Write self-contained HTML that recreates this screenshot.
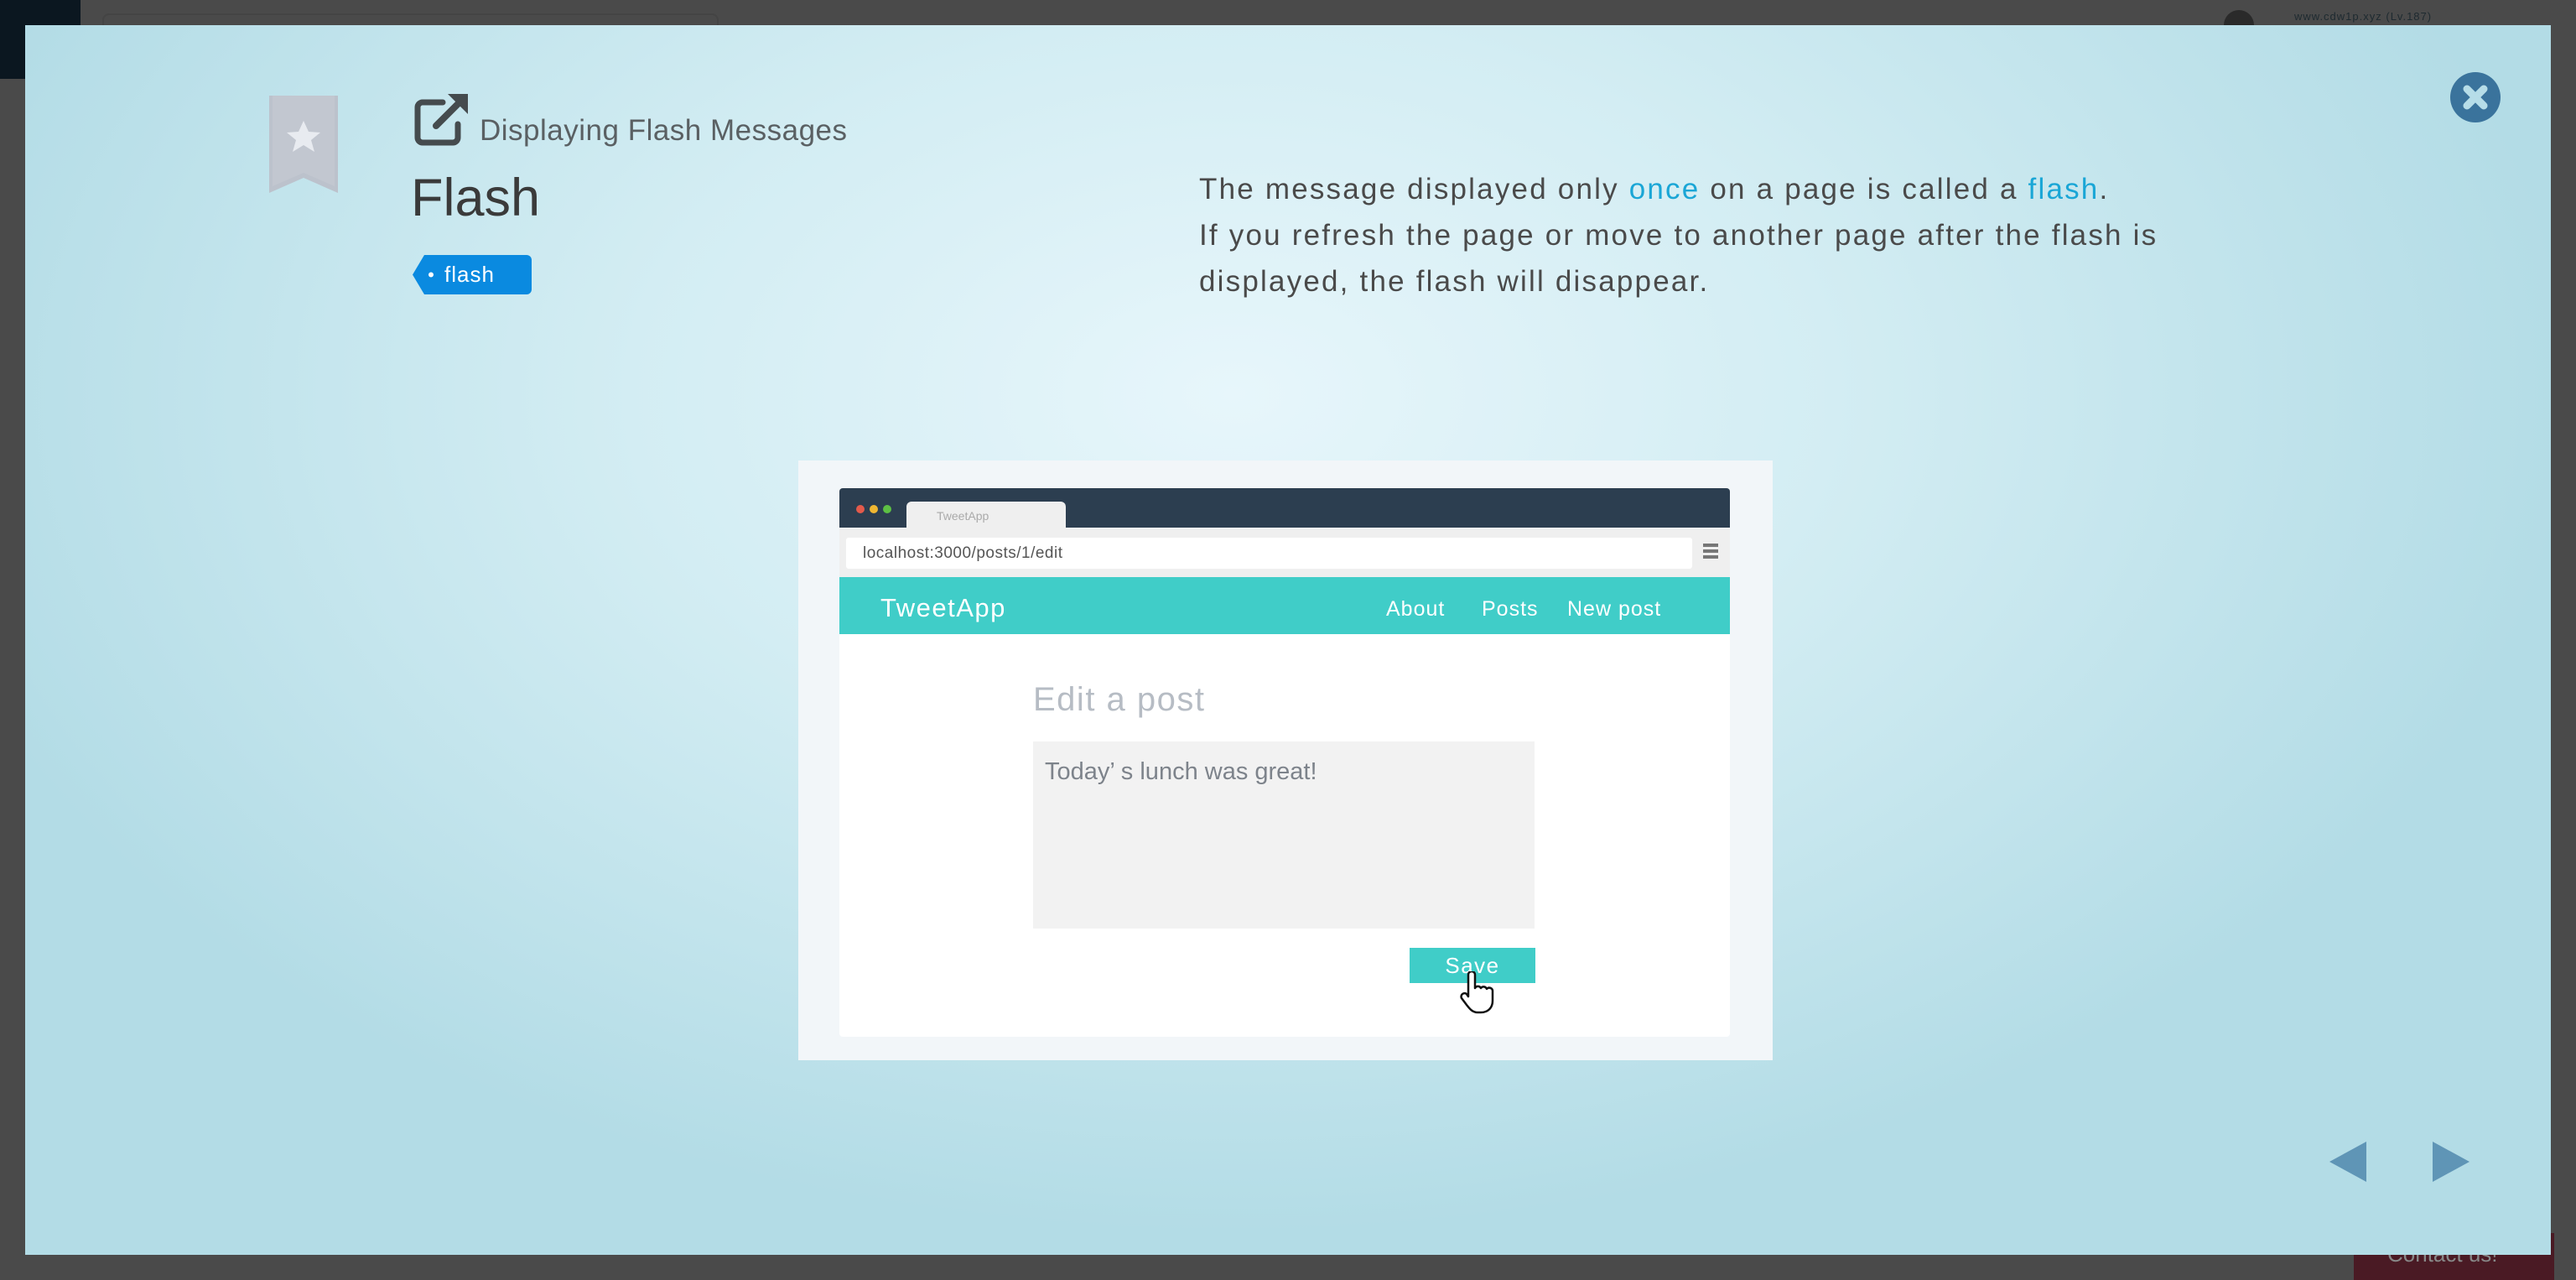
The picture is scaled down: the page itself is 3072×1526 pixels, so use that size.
<!DOCTYPE html>
<html><head><meta charset="utf-8"><style>
*{margin:0;padding:0;box-sizing:border-box}
html,body{width:3072px;height:1526px;overflow:hidden;background:#4a4a4a;font-family:"Liberation Sans",sans-serif}
.abs{position:absolute}
#modal{left:30px;top:30px;width:3012px;height:1466px;background:radial-gradient(ellipse 1600px 1000px at 1440px 440px,#e7f6fb 0%,#d3edf3 45%,#b3dce6 100%);overflow:hidden}
.dt{color:#4a4a4a;font-size:35px;line-height:55px;letter-spacing:2.2px}
.lk{color:#1aa6d6}
</style></head><body>
<div class="abs" style="left:0;top:0;width:96px;height:94px;background:#0b1720"></div>
<div class="abs" style="left:122px;top:16px;width:735px;height:30px;border:2px solid #444;border-radius:8px"></div>
<div class="abs" style="left:2652px;top:12px;width:36px;height:36px;border-radius:50%;background:#2a2a2a"></div>
<div class="abs" style="left:2736px;top:12px;font-size:13px;color:#1e2a30;letter-spacing:1px">www.cdw1p.xyz (Lv.187)</div>
<div class="abs" style="left:2807px;top:1470px;width:239px;height:56px;background:#4a1a24;color:#888;font-size:26px;padding:10px 0 0 40px">Contact us!</div>

<div id="modal" class="abs">
  <svg class="abs" style="left:289px;top:84px" width="86" height="116" viewBox="0 0 86 116">
    <path d="M2 0H84V116L43 98L2 116Z" fill="#bcc2cc"/>
    <path d="M6 0H80V108L43 92L6 108Z" fill="#c2c7d0"/>
    <path d="M43 30l6 13 14 1-11 9 4 14-13-8-13 8 4-14-11-9 14-1z" fill="#e8ebf0"/>
  </svg>
  <svg class="abs" style="left:464px;top:80px" width="66" height="64" viewBox="0 0 66 64">
    <path d="M34 12H10a6 6 0 0 0-6 6v36a6 6 0 0 0 6 6h36a6 6 0 0 0 6-6V38" fill="none" stroke="#454b4e" stroke-width="7" stroke-linecap="round"/>
    <path d="M26 40L58 8" stroke="#454b4e" stroke-width="8" stroke-linecap="round"/>
    <path d="M40 2H64V26Z" fill="#454b4e"/>
  </svg>
  <div class="abs" style="left:542px;top:106px;font-size:35px;color:#5a6063;letter-spacing:0.5px">Displaying Flash Messages</div>
  <div class="abs" style="left:460px;top:170px;font-size:63px;color:#3a3a3a">Flash</div>
  <div class="abs" style="left:462px;top:274px;width:142px;height:47px">
    <svg class="abs" style="left:0;top:0" width="142" height="47"><path d="M14 0H136a6 6 0 0 1 6 6V41a6 6 0 0 1-6 6H14L0 23.5Z" fill="#0a8ae0"/><circle cx="22" cy="23.5" r="3" fill="#fff"/></svg>
    <div class="abs" style="left:38px;top:8px;font-size:26px;color:#fff;letter-spacing:1px">flash</div>
  </div>
  <div class="abs dt" style="left:1400px;top:168px;width:1400px">The message displayed only <span class="lk">once</span> on a page is called a <span class="lk">flash</span>.<br>If you refresh the page or move to another page after the flash is<br>displayed, the flash will disappear.</div>

  <div class="abs" style="left:2892px;top:56px;width:60px;height:60px;border-radius:50%;background:#3a739c"></div>
  <svg class="abs" style="left:2892px;top:56px" width="60" height="60"><path d="M20 20L40 40M40 20L20 40" stroke="#b6dde8" stroke-width="9" stroke-linecap="round"/></svg>
  <svg class="abs" style="left:2748px;top:1331px" width="44" height="48"><path d="M44 0V48L0 24Z" fill="#5f95b6"/></svg>
  <svg class="abs" style="left:2871px;top:1331px" width="44" height="48"><path d="M0 0V48L44 24Z" fill="#5f95b6"/></svg>

  <div class="abs" style="left:922px;top:519px;width:1162px;height:715px;background:#f2f6f9"></div>
  <div class="abs" style="left:971px;top:552px;width:1062px;height:654px;background:#fff;border-radius:4px;overflow:hidden">
    <div class="abs" style="left:0;top:0;width:1062px;height:47px;background:#2c3e50"></div>
    <div class="abs" style="left:20px;top:20px;width:10px;height:10px;border-radius:50%;background:#e35a4b"></div>
    <div class="abs" style="left:36px;top:20px;width:10px;height:10px;border-radius:50%;background:#f0b732"></div>
    <div class="abs" style="left:52px;top:20px;width:10px;height:10px;border-radius:50%;background:#5dc044"></div>
    <div class="abs" style="left:80px;top:16px;width:190px;height:34px;background:#efefef;border-radius:6px 6px 0 0;font-size:14px;color:#aaa;padding:9px 0 0 36px">TweetApp</div>
    <div class="abs" style="left:0;top:47px;width:1062px;height:59px;background:#efefef"></div>
    <div class="abs" style="left:8px;top:59px;width:1009px;height:37px;background:#fff;border-radius:3px;font-size:19px;color:#555;padding:8px 0 0 20px;letter-spacing:0.5px">localhost:3000/posts/1/edit</div>
    <div class="abs" style="left:1030px;top:66px;width:18px;height:4px;background:#777;box-shadow:0 7px 0 #777,0 14px 0 #777"></div>
    <div class="abs" style="left:0;top:106px;width:1062px;height:68px;background:#40cdc8"></div>
    <div class="abs" style="left:49px;top:125px;font-size:31px;color:#fff;letter-spacing:1.5px">TweetApp</div>
    <div class="abs" style="left:652px;top:130px;font-size:25px;color:#fff;letter-spacing:1px">About</div>
    <div class="abs" style="left:766px;top:130px;font-size:25px;color:#fff;letter-spacing:1px">Posts</div>
    <div class="abs" style="left:868px;top:130px;font-size:25px;color:#fff;letter-spacing:1px">New post</div>
    <div class="abs" style="left:231px;top:230px;font-size:40px;color:#b6bcc4;letter-spacing:1.5px">Edit a post</div>
    <div class="abs" style="left:231px;top:302px;width:598px;height:223px;background:#f2f2f2"></div>
    <div class="abs" style="left:245px;top:322px;font-size:29px;color:#7d838b">Today’ s lunch was great!</div>
    <div class="abs" style="left:680px;top:548px;width:150px;height:42px;background:#40cdc8;color:#fff;font-size:26px;text-align:center;line-height:42px;letter-spacing:1.5px">Save</div>
    <svg class="abs" style="left:740px;top:576px" width="44" height="52" viewBox="0 0 44 52"><path d="M10 4a4 4 0 0 1 8 0v16a4 4 0 0 1 7 0a4 4 0 0 1 7 1a4 4 0 0 1 7 2v12c0 9-6 14-14 14h-4c-6 0-9-4-13-9L2 32a4 4 0 0 1 6-5l2 3Z" fill="#fff" stroke="#111" stroke-width="2.5" stroke-linejoin="round"/></svg>
  </div>
</div>
</body></html>
